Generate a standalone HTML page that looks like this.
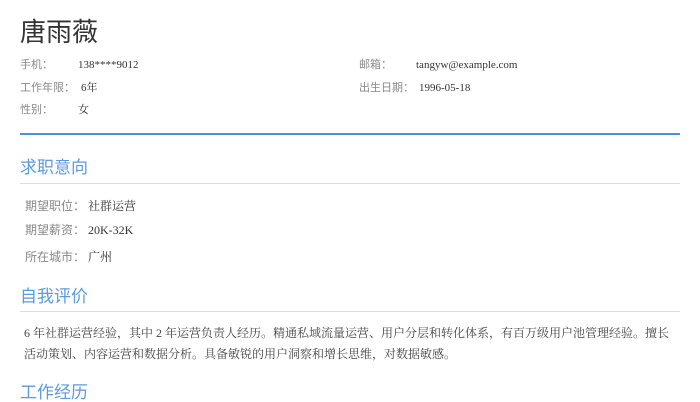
<!DOCTYPE html>
<html><head><meta charset="utf-8"><style>
body{margin:0;width:700px;height:400px;background:#fff;overflow:hidden;font-family:"Liberation Serif","Noto Sans CJK SC",serif;position:relative}
.a{position:absolute;white-space:nowrap;line-height:1}
.n{left:20px;top:20px;font-size:26px;color:#333}
.l{font-size:11px;color:#888}
.v{font-size:11px;color:#333;font-family:"Liberation Serif","Noto Serif CJK SC",serif}
.h{font-size:17px;color:#5b9be0;left:20px}
.k{font-size:12px;color:#888;left:25px}
.w{font-size:12px;color:#333;left:88px;font-family:"Liberation Serif","Noto Serif CJK SC",serif}
.p{font-size:12px;color:#444;left:24px;font-family:"Liberation Serif","Noto Serif CJK SC",serif}
.line{position:absolute;left:20px;width:660px}
</style></head><body>
<div class="a n">唐雨薇</div>
<div class="a l" style="left:20px;top:60px">手机：</div>
<div class="a v" style="left:78px;top:60px">138****9012</div>
<div class="a l" style="left:20px;top:83px">工作年限：</div>
<div class="a v" style="left:81px;top:83px">6年</div>
<div class="a l" style="left:20px;top:105px">性别：</div>
<div class="a v" style="left:78px;top:105px">女</div>
<div class="a l" style="left:359px;top:60px">邮箱：</div>
<div class="a v" style="left:416px;top:60px">tangyw@example.com</div>
<div class="a l" style="left:359px;top:83px">出生日期：</div>
<div class="a v" style="left:419px;top:83px">1996-05-18</div>
<div class="line" style="top:133px;height:2px;background:#4a90e2"></div>
<div class="a h" style="top:159px">求职意向</div>
<div class="line" style="top:183px;height:1px;background:#ddd"></div>
<div class="a k" style="top:200px">期望职位：</div><div class="a w" style="top:200px">社群运营</div>
<div class="a k" style="top:224px">期望薪资：</div><div class="a w" style="top:224px">20K-32K</div>
<div class="a k" style="top:251px">所在城市：</div><div class="a w" style="top:251px">广州</div>
<div class="a h" style="top:288px">自我评价</div>
<div class="line" style="top:311px;height:1px;background:#ddd"></div>
<div class="a p" style="top:327px">6 年社群运营经验，其中 2 年运营负责人经历。精通私域流量运营、用户分层和转化体系，有百万级用户池管理经验。擅长</div>
<div class="a p" style="top:348px">活动策划、内容运营和数据分析。具备敏锐的用户洞察和增长思维，对数据敏感。</div>
<div class="a h" style="top:384px">工作经历</div>
</body></html>
